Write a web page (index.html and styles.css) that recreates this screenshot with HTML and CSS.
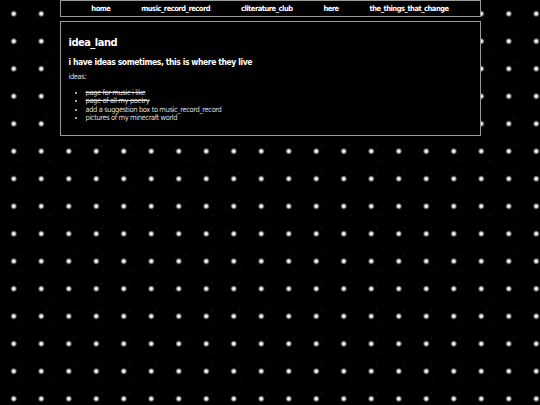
FILE: index.html
```html
<!DOCTYPE html>
<html lang="en">
<head>
  <meta charset="UTF-8">
  <title>idea_land</title>
  <link rel="stylesheet" href="styles.css">
</head>
<body>
  <nav class="topnav">
    <a href="#">home</a>
    <a href="#">music_record_record</a>
    <a href="#">cliterature_club</a>
    <a href="#">here</a>
    <a href="#">the_things_that_change</a>
  </nav>

  <main class="box">
    <h1>idea_land</h1>
    <h3>i have ideas sometimes, this is where they live</h3>
    <p>ideas:</p>
    <ul>
      <li class="done">page for music i like</li>
      <li class="done">page of all my poetry</li>
      <li>add a suggestion box to music_record_record</li>
      <li>pictures of my minecraft world</li>
    </ul>
  </main>
</body>
</html>
```

FILE: styles.css
```css
* {
  margin: 0;
  padding: 0;
  box-sizing: border-box;
}

body {
  background-color: #000;
  background-image:
    radial-gradient(circle at 13.75px 13.75px, #fff 0, #fff 1.2px, rgba(255,255,255,0.45) 2.3px, rgba(0,0,0,0) 3.3px),
    radial-gradient(circle at 19px 8px, rgba(255,255,255,0.18) 0, rgba(0,0,0,0) 1px),
    radial-gradient(circle at 21px 23px, rgba(255,255,255,0.12) 0, rgba(0,0,0,0) 1px);
  background-size: 27.5px 27.5px;
  color: #dcdcdc;
  font-family: "DejaVu Sans Condensed", "DejaVu Sans", sans-serif;
  min-height: 405px;
}

.topnav {
  width: 421px;
  margin: 0 auto;
  height: 17px;
  background: #000;
  border: 1px solid #9a9a9a;
  display: flex;
  justify-content: space-evenly;
  align-items: center;
}

.topnav a {
  color: #fff;
  text-decoration: none;
  font-size: 7.5px;
  font-weight: bold;
  letter-spacing: -0.5px;
}

.box {
  width: 421px;
  margin: 4px auto 0;
  height: 115px;
  background: #000;
  border: 1px solid #9a9a9a;
  padding: 14px 8px;
}

.box h1 {
  font-size: 11px;
  color: #fff;
  letter-spacing: -0.5px;
  margin-bottom: 8px;
}

.box h3 {
  font-size: 8.5px;
  color: #fff;
  letter-spacing: -0.4px;
  margin-bottom: 5px;
}

.box p {
  font-size: 7.5px;
  letter-spacing: -0.4px;
  margin-bottom: 8px;
}

.box ul {
  font-size: 7.5px;
  letter-spacing: -0.4px;
  padding-left: 17px;
  line-height: 8.4px;
}

.box li.done {
  text-decoration: line-through;
}
```
